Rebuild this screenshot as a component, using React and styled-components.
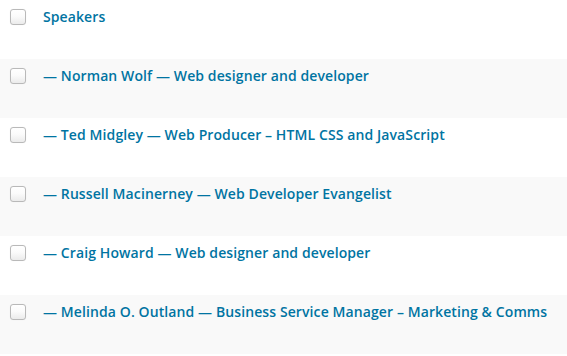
import React from "react";
import styled, { createGlobalStyle } from "styled-components";

const Global = createGlobalStyle`
  html, body { margin: 0; padding: 0; background: #fff; }
  body { font-family: "Open Sans", "Liberation Sans", sans-serif; }
`;

const List = styled.div`
  display: flex;
  flex-direction: column;
  width: 567px;
`;

const Row = styled.div`
  display: flex;
  align-items: flex-start;
  gap: 17px;
  height: 59px;
  box-sizing: border-box;
  padding: 8px 10px 0 10px;
  background: ${(p) => (p.$alt ? "#f9f9f9" : "#ffffff")};
`;

const Check = styled.span`
  display: block;
  flex: none;
  width: 16px;
  height: 16px;
  margin-top: 1px;
  box-sizing: border-box;
  border: 1px solid #b9b9b9;
  border-radius: 3px;
  background: linear-gradient(#ffffff 0%, #fbfbfb 45%, #ebebeb 100%);
  box-shadow: 0 0 1px rgba(0, 0, 0, 0.08);
`;

const Title = styled.a`
  font-size: 14px;
  line-height: 18px;
  font-weight: 600;
  letter-spacing: 0.1px;
  color: #0074a2;
  text-decoration: none;
  white-space: nowrap;
`;

const items = [
  "Speakers",
  "— Norman Wolf — Web designer and developer",
  "— Ted Midgley — Web Producer – HTML CSS and JavaScript",
  "— Russell Macinerney — Web Developer Evangelist",
  "— Craig Howard — Web designer and developer",
  "— Melinda O. Outland — Business Service Manager – Marketing & Comms",
];

export default function App() {
  return (
    <>
      <Global />
      <List>
        {items.map((t, i) => (
          <Row key={i} $alt={i % 2 === 1}>
            <Check />
            <Title href="#">{t}</Title>
          </Row>
        ))}
      </List>
    </>
  );
}
